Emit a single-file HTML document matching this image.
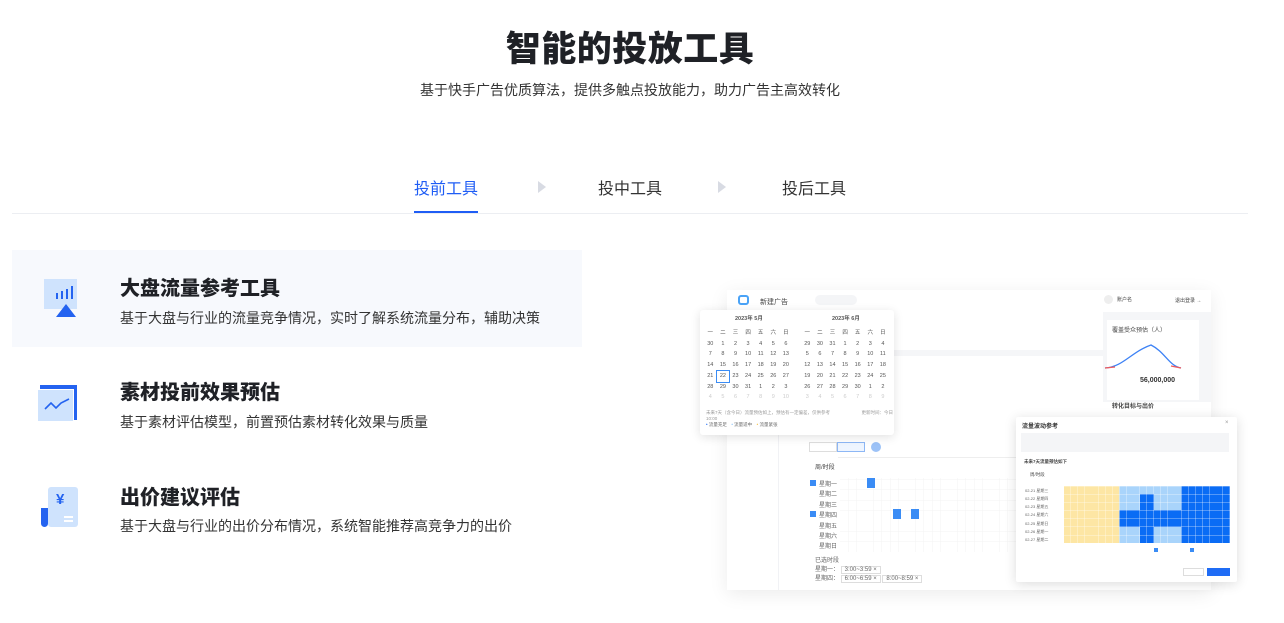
<!DOCTYPE html>
<html><head><meta charset="utf-8"><style>
*{margin:0;padding:0;box-sizing:border-box}
body{width:1284px;height:623px;background:#fff;position:relative;overflow:hidden;font-family:"Liberation Sans","Noto Sans CJK SC",sans-serif;color:#222}
.a{position:absolute}
h1{position:absolute;left:0;width:1260px;top:21px;text-align:center;font-size:35px;font-weight:900;color:#1f2126;letter-spacing:0.5px}
.sub{left:0;width:1260px;top:80px;text-align:center;font-size:14px;color:#333}
.tab{top:175px;font-size:16px;color:#333}
.tri{width:0;height:0;border-left:8px solid #d8dbe3;border-top:6px solid transparent;border-bottom:6px solid transparent;top:181px}
.t{font-size:20px;font-weight:900;color:#1f2126;left:120px}
.d{font-size:14px;color:#333;left:120px}
.s{font-size:6px;color:#444}
.cal span{display:inline-block;width:12.6px;text-align:center}
.row{height:8.15px;width:166px}
</style></head><body>
<h1>智能的投放工具</h1>
<div class="a sub">基于快手广告优质算法，提供多触点投放能力，助力广告主高效转化</div>
<div class="a tab" style="left:414px;color:#1f5df5">投前工具</div>
<div class="a tri" style="left:538px"></div>
<div class="a tab" style="left:598px">投中工具</div>
<div class="a tri" style="left:718px"></div>
<div class="a tab" style="left:782px">投后工具</div>
<div class="a" style="left:12px;top:213px;width:1236px;height:1px;background:#eceef2"></div>
<div class="a" style="left:414px;top:211px;width:64px;height:2px;background:#1f5df5"></div>

<div class="a" style="left:12px;top:250px;width:570px;height:97px;background:#f7f9fd"></div>
<div class="a" style="left:44px;top:279px;width:33px;height:30px;background:#cfe3fd"></div>
<div class="a" style="left:56px;top:293px;width:2px;height:6px;background:#2463f0"></div>
<div class="a" style="left:61px;top:291px;width:2px;height:8px;background:#2463f0"></div>
<div class="a" style="left:66px;top:289px;width:2px;height:10px;background:#2463f0"></div>
<div class="a" style="left:71px;top:286px;width:2px;height:13px;background:#2463f0"></div>
<div class="a" style="left:56px;top:304px;width:0;height:0;border-left:10px solid transparent;border-right:10px solid transparent;border-bottom:13px solid #2463f0"></div>
<div class="a" style="left:40px;top:385px;width:37px;height:35px;background:#2463f0"></div>
<div class="a" style="left:38px;top:389px;width:36px;height:33px;background:#fff"></div>
<div class="a" style="left:38px;top:390px;width:35px;height:31px;background:#cfe3fd"></div>
<svg class="a" style="left:44px;top:397px" width="26" height="16"><path d="M1 12 L7 6 L12 11 L17 6 L25 2" stroke="#2463f0" stroke-width="1.6" fill="none"/></svg>
<div class="a" style="left:48px;top:487px;width:30px;height:40px;background:#cfe3fd;border-radius:3px"></div>
<div class="a" style="left:41px;top:508px;width:7px;height:19px;background:#2463f0;border-radius:0 0 4px 4px"></div>
<div class="a" style="left:56px;top:491px;font-size:15px;font-weight:bold;color:#2463f0">¥</div>
<div class="a" style="left:64px;top:516px;width:9px;height:1.5px;background:#fff"></div>
<div class="a" style="left:64px;top:520px;width:9px;height:1.5px;background:#fff"></div>

<div class="a t" style="top:272px">大盘流量参考工具</div>
<div class="a d" style="top:308px">基于大盘与行业的流量竞争情况，实时了解系统流量分布，辅助决策</div>
<div class="a t" style="top:376px">素材投前效果预估</div>
<div class="a d" style="top:412px">基于素材评估模型，前置预估素材转化效果与质量</div>
<div class="a t" style="top:481px">出价建议评估</div>
<div class="a d" style="top:516px">基于大盘与行业的出价分布情况，系统智能推荐高竞争力的出价</div>

<div class="a" style="left:727px;top:290px;width:484px;height:300px;background:#fff;box-shadow:0 4px 18px rgba(0,0,0,.08)"></div>
<div class="a" style="left:727px;top:312px;width:52px;height:278px;background:#fff;border-right:1px solid #f1f2f5"></div>
<div class="a" style="left:785px;top:350px;width:318px;height:6px;background:#f5f6f8"></div>
<div class="a" style="left:1103px;top:312px;width:108px;height:90px;background:#f5f6f8"></div>
<div class="a" style="left:1107px;top:320px;width:92px;height:80px;background:#fff"></div>
<div class="a s" style="left:1112px;top:325px;font-size:6px">覆盖受众预估（人）</div>
<svg class="a" style="left:1103px;top:340px" width="80" height="30"><path d="M2 28 C20 27 28 12 48 5 C62 12 66 26 78 28" stroke="#3d82f5" stroke-width="1.3" fill="none"/><path d="M2 28 L12 27 M68 26 L78 28" stroke="#f05a5a" stroke-width="1.3"/></svg>
<div class="a" style="left:1140px;top:377px;font-size:7px;font-weight:bold;color:#333">56,000,000</div>
<div class="a s" style="left:1112px;top:401px;font-size:6px;font-weight:bold">转化目标与出价</div>
<div class="a" style="left:738px;top:295px;width:11px;height:10px;border:2px solid #4aa3f7;border-radius:3px"></div>
<div class="a s" style="left:760px;top:297px;font-size:7px">新建广告</div>
<div class="a" style="left:815px;top:295px;width:42px;height:10px;background:#f4f5f7;border-radius:5px"></div>
<div class="a" style="left:1104px;top:295px;width:9px;height:9px;border-radius:50%;background:#eee"></div>
<div class="a s" style="left:1117px;top:296px;font-size:5px">账户名</div>
<div class="a s" style="left:1175px;top:297px;font-size:5px">退出登录 →</div>
<div class="a" style="left:809px;top:442px;width:28px;height:10px;border:1px solid #ddd"></div>
<div class="a" style="left:837px;top:442px;width:28px;height:10px;border:1px solid #8db7f5;background:#eef5ff"></div>
<div class="a" style="left:871px;top:442px;width:10px;height:10px;border-radius:50%;background:#9cc2f7"></div>
<div class="a s" style="left:815px;top:462px">周/时段</div>
<div class="a" style="left:838px;top:457px;width:266px;height:1px;background:#eee"></div>
<div class="a" style="left:840px;top:478px;width:265px;height:74px;background:repeating-linear-gradient(90deg,transparent 0 8px,#f2f2f2 8px 8.4px),repeating-linear-gradient(0deg,transparent 0 10px,#f2f2f2 10px 10.4px);opacity:.9"></div>
<div class="a" style="left:867px;top:478px;width:8px;height:10px;background:#3a8cf5"></div>
<div class="a" style="left:893px;top:509px;width:8px;height:10px;background:#3a8cf5"></div>
<div class="a" style="left:911px;top:509px;width:8px;height:10px;background:#3a8cf5"></div>
<div class="a" style="left:810px;top:480px;width:6px;height:6px;background:#3a8cf5"></div>
<div class="a" style="left:810px;top:511px;width:6px;height:6px;background:#3a8cf5"></div>
<div class="a s" style="left:819px;top:480px;line-height:10.4px;color:#666">星期一<br>星期二<br>星期三<br>星期四<br>星期五<br>星期六<br>星期日</div>
<div class="a s" style="left:815px;top:555px;color:#666">已选时段</div>
<div class="a s" style="left:815px;top:564px;color:#666">星期一： <span style="border:1px solid #ddd;padding:0 3px">3:00~3:59 ×</span></div>
<div class="a s" style="left:815px;top:573px;color:#666">星期四： <span style="border:1px solid #ddd;padding:0 3px">6:00~6:59 ×</span> <span style="border:1px solid #ddd;padding:0 3px">8:00~8:59 ×</span></div>

<div class="a cal" style="left:700px;top:310px;width:194px;height:125px;background:#fff;box-shadow:0 2px 10px rgba(0,0,0,.12);border-radius:3px;font-size:5.5px;color:#555">
<div class="a" style="left:35px;top:4px;font-weight:bold">2023年 5月</div>
<div class="a" style="left:132px;top:4px;font-weight:bold">2023年 6月</div>
<div class="a" style="left:4px;top:18px;width:92px;line-height:10.7px"><span>一</span><span>二</span><span>三</span><span>四</span><span>五</span><span>六</span><span>日</span><br><span>30</span><span>1</span><span>2</span><span>3</span><span>4</span><span>5</span><span>6</span><br><span>7</span><span>8</span><span>9</span><span>10</span><span>11</span><span>12</span><span>13</span><br><span>14</span><span>15</span><span>16</span><span>17</span><span>18</span><span>19</span><span>20</span><br><span>21</span><span style="outline:1px solid #3a8cf5">22</span><span>23</span><span>24</span><span>25</span><span>26</span><span>27</span><br><span>28</span><span>29</span><span>30</span><span>31</span><span>1</span><span>2</span><span>3</span><br><span style="color:#ccc">4</span><span style="color:#ccc">5</span><span style="color:#ccc">6</span><span style="color:#ccc">7</span><span style="color:#ccc">8</span><span style="color:#ccc">9</span><span style="color:#ccc">10</span></div>
<div class="a" style="left:101px;top:18px;width:92px;line-height:10.7px"><span>一</span><span>二</span><span>三</span><span>四</span><span>五</span><span>六</span><span>日</span><br><span>29</span><span>30</span><span>31</span><span>1</span><span>2</span><span>3</span><span>4</span><br><span>5</span><span>6</span><span>7</span><span>8</span><span>9</span><span>10</span><span>11</span><br><span>12</span><span>13</span><span>14</span><span>15</span><span>16</span><span>17</span><span>18</span><br><span>19</span><span>20</span><span>21</span><span>22</span><span>23</span><span>24</span><span>25</span><br><span>26</span><span>27</span><span>28</span><span>29</span><span>30</span><span>1</span><span>2</span><br><span style="color:#ccc">3</span><span style="color:#ccc">4</span><span style="color:#ccc">5</span><span style="color:#ccc">6</span><span style="color:#ccc">7</span><span style="color:#ccc">8</span><span style="color:#ccc">9</span></div>
<div class="a" style="left:6px;top:100px;color:#999;font-size:4.5px">未来7天（含今日）流量预估如上，预估有一定偏差，仅供参考　　　　　　　更新时间：今日10:00</div>
<div class="a" style="left:6px;top:112px;font-size:4.5px;color:#666"><b style="color:#1f6cf5">•</b> 流量充足　<b style="color:#8cc4fa">•</b> 流量适中　<b style="color:#f5c14a">•</b> 流量紧张</div>
</div>

<div class="a" style="left:1016px;top:417px;width:221px;height:165px;background:#fff;box-shadow:0 2px 12px rgba(0,0,0,.14);border-radius:2px"></div>
<div class="a s" style="left:1022px;top:421px;font-weight:bold;color:#333">流量波动参考</div>
<div class="a s" style="left:1225px;top:420px;color:#999">×</div>
<div class="a" style="left:1021px;top:433px;width:208px;height:19px;background:#f4f5f7"></div>
<div class="a s" style="left:1024px;top:459px;font-size:4.5px;font-weight:bold">未来7天流量预估如下</div>
<div class="a s" style="left:1030px;top:472px;font-size:4.5px">周/时段</div>
<div class="a" style="left:1064px;top:486px">
<div class="row" style="background:linear-gradient(90deg,#fde6a4 0 33.3%,#a9d4fb 33.3% 70.8%,#0a6cf5 70.8%)"></div>
<div class="row" style="background:linear-gradient(90deg,#fde6a4 0 33.3%,#a9d4fb 33.3% 45.8%,#0a6cf5 45.8% 54.2%,#a9d4fb 54.2% 70.8%,#0a6cf5 70.8%)"></div>
<div class="row" style="background:linear-gradient(90deg,#fde6a4 0 33.3%,#a9d4fb 33.3% 45.8%,#0a6cf5 45.8% 54.2%,#a9d4fb 54.2% 70.8%,#0a6cf5 70.8%)"></div>
<div class="row" style="background:linear-gradient(90deg,#fde6a4 0 33.3%,#0a6cf5 33.3%)"></div>
<div class="row" style="background:linear-gradient(90deg,#fde6a4 0 33.3%,#0a6cf5 33.3%)"></div>
<div class="row" style="background:linear-gradient(90deg,#fde6a4 0 33.3%,#a9d4fb 33.3% 45.8%,#0a6cf5 45.8% 54.2%,#a9d4fb 54.2% 70.8%,#0a6cf5 70.8%)"></div>
<div class="row" style="background:linear-gradient(90deg,#fde6a4 0 33.3%,#a9d4fb 33.3% 45.8%,#0a6cf5 45.8% 54.2%,#a9d4fb 54.2% 70.8%,#0a6cf5 70.8%)"></div>
</div>
<div class="a" style="left:1064px;top:486px;width:166px;height:57px;background:repeating-linear-gradient(90deg,transparent 0 6.5px,rgba(255,255,255,.6) 6.5px 6.92px),repeating-linear-gradient(0deg,transparent 0 7.7px,rgba(255,255,255,.6) 7.7px 8.15px)"></div>
<div class="a s" style="left:1025px;top:487px;font-size:4px;line-height:8.15px;color:#666">02-21 星期三<br>02-22 星期四<br>02-23 星期五<br>02-24 星期六<br>02-25 星期日<br>02-26 星期一<br>02-27 星期二</div>
<div class="a" style="left:1183px;top:568px;width:21px;height:8px;border:1px solid #ddd"></div>
<div class="a" style="left:1207px;top:568px;width:23px;height:8px;background:#1f6cf5"></div>
<div class="a" style="left:1154px;top:548px;width:4px;height:4px;background:#3a8cf5"></div>
<div class="a" style="left:1190px;top:548px;width:4px;height:4px;background:#3a8cf5"></div>
</body></html>
